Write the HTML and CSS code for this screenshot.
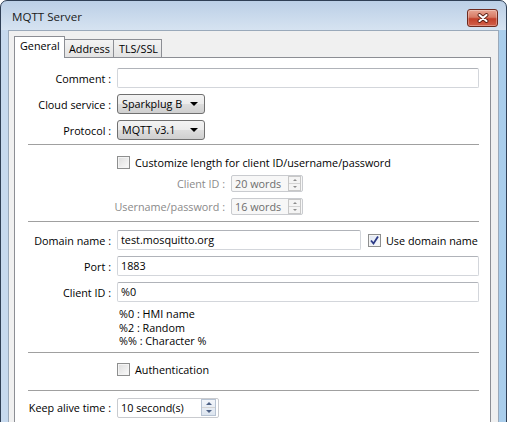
FILE: index.html
```html
<!DOCTYPE html>
<html lang="en">
<head>
    <meta charset="UTF-8">
    <meta name="viewport" content="width=device-width, initial-scale=1.0">
    <title>MQTT Server</title>
    <link rel="stylesheet" href="styles.css">
</head>
<body>
    <div class="window">
        <div class="titlebar">
            <span class="title">MQTT Server</span>
            <span class="close-btn">
                <svg width="14" height="10" viewBox="0 0 14 10">
                    <path d="M3.5 2 L10.5 8 M10.5 2 L3.5 8" stroke="#5a2016" stroke-width="3.8" stroke-linecap="round"/>
                    <path d="M3.5 2 L10.5 8 M10.5 2 L3.5 8" stroke="#ffffff" stroke-width="2.1" stroke-linecap="round"/>
                </svg>
            </span>
        </div>

        <div class="client">
            <!-- Tabs -->
            <div class="tabs">
                <div class="tab active">General</div>
                <div class="tab">Address</div>
                <div class="tab">TLS/SSL</div>
            </div>

            <div class="panel">
                <div class="form-grid top-rows">
                    <span class="lbl">Comment :</span>
                    <div class="textbox"></div>
                    <span class="lbl">Cloud service :</span>
                    <div class="combo">Sparkplug B<span class="arrow"></span></div>
                    <span class="lbl">Protocol :</span>
                    <div class="combo">MQTT v3.1<span class="arrow"></span></div>
                </div>

                <div class="sep sep-a"></div>

                <div class="form-grid check-row">
                    <span></span>
                    <div class="check"><span class="box"></span>Customize length for client ID/username/password</div>
                </div>
                <div class="len-grid">
                    <span class="lbl disabled">Client ID :</span>
                    <div class="spin small disabled">
                        <span class="spin-text">20 words</span>
                        <span class="spin-btns"><span class="up"></span><span class="down"></span></span>
                    </div>
                    <span class="lbl disabled">Username/password :</span>
                    <div class="spin small disabled">
                        <span class="spin-text">16 words</span>
                        <span class="spin-btns"><span class="up"></span><span class="down"></span></span>
                    </div>
                </div>

                <div class="sep sep-b"></div>

                <div class="form-grid server-rows">
                    <span class="lbl">Domain name :</span>
                    <div class="domain-row">
                        <div class="textbox domain">test.mosquitto.org</div>
                        <div class="check"><span class="box checked">
                            <svg width="11" height="11" viewBox="0 0 11 11"><path d="M2 5.5 L4.5 8.5 L9 1.5" fill="none" stroke="#2c3a86" stroke-width="1.8"/></svg>
                        </span>Use domain name</div>
                    </div>
                    <span class="lbl">Port :</span>
                    <div class="textbox">1883</div>
                    <span class="lbl">Client ID :</span>
                    <div class="textbox">%0</div>
                </div>
                <div class="form-grid">
                    <span></span>
                    <div class="notes">
                        <div>%0 : HMI name</div>
                        <div>%2 : Random</div>
                        <div>%% : Character %</div>
                    </div>
                </div>

                <div class="sep sep-c"></div>

                <div class="form-grid check-row auth">
                    <span></span>
                    <div class="check"><span class="box"></span>Authentication</div>
                </div>

                <div class="sep sep-d"></div>

                <div class="form-grid keep-row">
                    <span class="lbl">Keep alive time :</span>
                    <div class="spin keep">
                        <span class="spin-text">10 second(s)</span>
                        <span class="spin-btns"><span class="up"></span><span class="down"></span></span>
                    </div>
                </div>
            </div>
        </div>
    </div>
</body>
</html>
```

FILE: styles.css
```css
html, body {
    margin: 0;
    padding: 0;
    background: #ffffff;
    overflow: hidden;
}
body {
    font-family: "Open Sans", "Noto Sans", Arial, sans-serif;
    font-size: 10.8px;
    color: #000000;
}
.window {
    width: 507px;
    height: 450px;
    box-sizing: border-box;
    border: 1px solid #2f3f55;
    border-radius: 7px 7px 0 0;
    padding: 0 7px;
    display: flex;
    flex-direction: column;
    background:
        linear-gradient(to bottom, #bbcfe6 0, #d6e3f1 29px, rgba(0, 0, 0, 0) 29px),
        linear-gradient(to right, #c6d9ee, #c4d9ee 50%, #a9cdeb);
}
.titlebar {
    height: 29px;
    display: flex;
    justify-content: space-between;
    align-items: flex-start;
}
.title {
    margin-top: 8px;
    margin-left: 4px;
    font-size: 11.6px;
    color: #1a1a1a;
}
.close-btn {
    margin-top: 8px;
    margin-right: 1px;
    width: 31px;
    height: 18px;
    box-sizing: border-box;
    border: 1px solid #6e2a1e;
    border-radius: 3px;
    background: linear-gradient(to bottom, #e8a593 0, #d77a64 45%, #c2402a 55%, #d2604a 100%);
    display: flex;
    align-items: center;
    justify-content: center;
    box-shadow: inset 0 0 0 1px rgba(255, 255, 255, 0.3);
}
.close-btn svg {
    display: block;
}
.client {
    flex: 1;
    background: #f0f0f0;
    border: 1px solid #9aa9ba;
    border-bottom: none;
    padding: 5px 7px 0 5px;
    display: flex;
    flex-direction: column;
}
.tabs {
    display: flex;
    align-items: flex-end;
    height: 22px;
    position: relative;
    z-index: 1;
    margin-bottom: -1px;
}
.tab {
    height: 18px;
    box-sizing: border-box;
    border: 1px solid #8c8e94;
    border-bottom: none;
    border-left: none;
    padding: 0 6px;
    line-height: 17px;
    background: linear-gradient(to bottom, #f3f3f3, #e3e3e3);
    margin-bottom: 1px;
}
.tab.active {
    height: 22px;
    width: 51px;
    border-left: 1px solid #8c8e94;
    background: #ffffff;
    margin-bottom: 0;
    line-height: 18px;
    padding: 0 0 0 5px;
}
.tab:nth-child(2) {
    width: 49px;
    padding: 0 0 0 4px;
}
.tab:nth-child(3) {
    width: 48px;
    padding: 0 0 0 5px;
}
.panel {
    flex: 1;
    background: #ffffff;
    border: 1px solid #8c8e94;
    border-bottom: none;
    padding: 0 11px 0 13px;
}
.form-grid {
    display: grid;
    grid-template-columns: 83px 362px;
    column-gap: 6px;
    align-items: center;
}
.lbl {
    text-align: right;
    white-space: nowrap;
}
.lbl.disabled {
    color: #8a8a8a;
}
.top-rows {
    margin-top: 10px;
    row-gap: 6px;
}
.textbox {
    height: 20px;
    box-sizing: border-box;
    border: 1px solid #d3d6db;
    border-top-color: #b0b3b9;
    border-radius: 2px;
    background: #ffffff;
    padding-left: 3px;
    line-height: 18px;
}
.combo {
    width: 88px;
    height: 20px;
    box-sizing: border-box;
    border: 1px solid #707070;
    border-radius: 3px;
    background: linear-gradient(to bottom, #f3f3f3 0, #ebebeb 50%, #dddddd 51%, #cfcfcf 100%);
    padding-left: 4px;
    line-height: 18px;
    display: flex;
    justify-content: space-between;
    align-items: center;
}
.arrow {
    width: 0;
    height: 0;
    border-left: 4px solid transparent;
    border-right: 4px solid transparent;
    border-top: 4px solid #000000;
    margin-right: 6px;
}
.sep {
    border-top: 1px solid #a0a0a0;
    border-bottom: 1px solid #ffffff;
}
.sep-a { margin-top: 4px; }
.sep-b { margin-top: 6px; }
.sep-c { margin-top: 4px; }
.sep-d { margin-top: 12px; }
.check-row {
    margin-top: 8px;
}
.check {
    display: flex;
    align-items: center;
    height: 16px;
    white-space: nowrap;
}
.box {
    width: 13px;
    height: 13px;
    box-sizing: border-box;
    border: 1px solid #8e8f8f;
    background: linear-gradient(135deg, #dcdcdc, #fbfbfb);
    box-shadow: inset 0 0 0 1px #f4f4f4;
    margin-right: 5px;
    display: flex;
    align-items: center;
    justify-content: center;
}
.box.checked {
    background: linear-gradient(135deg, #dfe6f2, #f7f9fc);
}
.box svg {
    display: block;
}
.len-grid {
    display: grid;
    grid-template-columns: 197px 72px;
    column-gap: 6px;
    row-gap: 6px;
    align-items: center;
    margin-top: 5px;
}
.spin {
    display: flex;
    justify-content: space-between;
    align-items: center;
    box-sizing: border-box;
    border: 1px solid #c9cbcf;
    border-radius: 2px;
    background: #ffffff;
    padding: 0 1px 0 3px;
}
.spin.small {
    height: 17px;
}
.spin.disabled {
    background: #f7f7f7;
    color: #6d6d6d;
}
.spin-btns {
    display: flex;
    flex-direction: column;
    width: 11px;
    border: 1px solid #c7c7c7;
    background: #f4f4f4;
}
.spin-btns span {
    height: 6px;
    display: flex;
    align-items: center;
    justify-content: center;
}
.spin-btns .up {
    border-bottom: 1px solid #d3d3d3;
}
.spin-btns .up::after {
    content: "";
    border-left: 2px solid transparent;
    border-right: 2px solid transparent;
    border-bottom: 2px solid #8c8c8c;
}
.spin-btns .down::after {
    content: "";
    border-left: 2px solid transparent;
    border-right: 2px solid transparent;
    border-top: 2px solid #8c8c8c;
}
.server-rows {
    margin-top: 7px;
    row-gap: 6px;
}
.domain-row {
    display: flex;
    align-items: center;
    gap: 7px;
}
.textbox.domain {
    width: 244px;
}
.notes {
    margin-top: 5px;
    padding-left: 2px;
    line-height: 13.5px;
}
.keep-row {
    margin-top: 6px;
}
.spin.keep {
    width: 102px;
    height: 20px;
    padding-right: 2px;
}
.spin.keep .spin-btns {
    width: 13px;
    border-color: #b7c3d3;
    background: linear-gradient(to bottom, #f2f5fa, #dde5ef);
}
.spin.keep .spin-btns span {
    height: 7px;
}
.spin.keep .up::after {
    border-bottom-color: #4d6185;
    border-left-width: 3px;
    border-right-width: 3px;
    border-bottom-width: 3px;
}
.spin.keep .down::after {
    border-top-color: #4d6185;
    border-left-width: 3px;
    border-right-width: 3px;
    border-top-width: 3px;
}
```
